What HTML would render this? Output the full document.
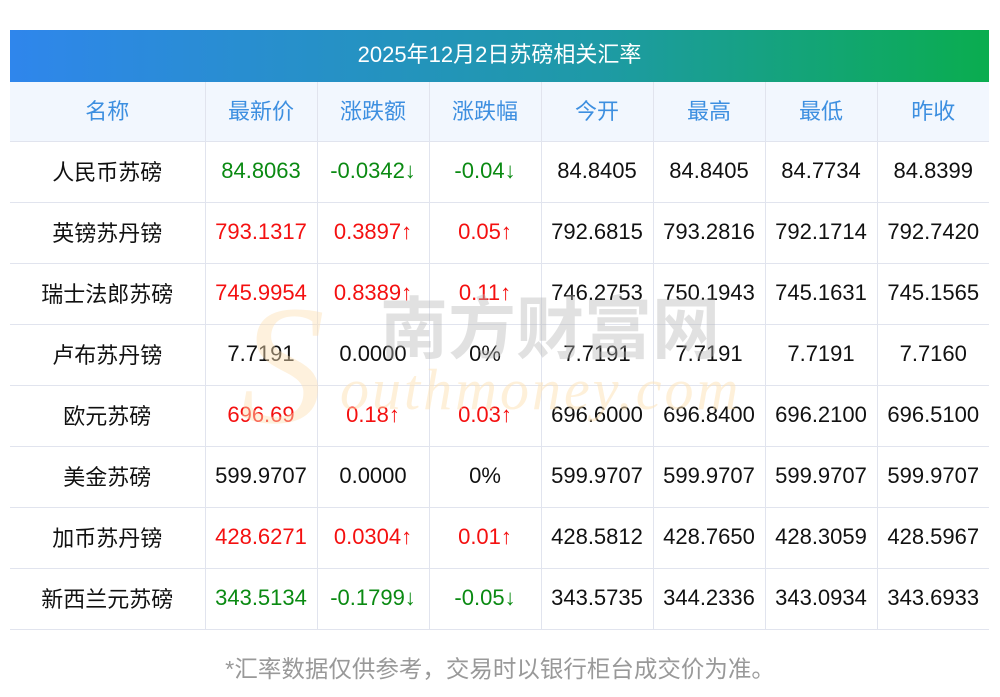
<!DOCTYPE html><html><head><meta charset="utf-8"><style>
body{margin:0;width:1000px;height:697px;background:#fff;font-family:"Liberation Sans","Noto Sans CJK SC",sans-serif;position:relative;overflow:hidden}
.title{position:absolute;left:10px;top:30px;width:979px;height:52px;background:linear-gradient(90deg,#2f86ec,#1e9aa6 60%,#0aad4f);color:#fff;font-size:22px;line-height:50px;text-align:center}
table{position:absolute;left:10px;top:82px;border-collapse:collapse;width:979px;table-layout:fixed}
td,th{border:1px solid #e1e4ee;height:57px;text-align:center;font-size:22px;font-weight:normal;padding:0 0 3px;color:#111}
tr:first-child th{border-top:none}
th{background:#f2f7fe;color:#3d8fe0;height:56px}
td:first-child,th:first-child{border-left:none}td:last-child,th:last-child{border-right:none}
.g{color:#0a8a12}.r{color:#f41010}
.foot{position:absolute;top:650px;left:0;width:1000px;text-align:center;color:#999;font-size:23.5px}
.wm1{position:absolute;left:380px;top:296px;font-size:68px;line-height:1;color:rgba(180,180,180,.4);font-weight:bold;z-index:2}
.wm2{position:absolute;left:340px;top:356px;font-size:58px;font-family:"Liberation Serif",serif;font-style:italic;color:rgba(253,225,180,.5);z-index:2;letter-spacing:3px}
.wmS{position:absolute;left:240px;top:280px;font-size:170px;font-family:"Liberation Serif",serif;font-style:italic;color:rgba(253,225,180,.45);z-index:2;line-height:1}
</style></head><body>
<div class="title">2025年12月2日苏磅相关汇率</div>
<table>
<colgroup><col style="width:195px"><col span="8" style="width:112px"></colgroup>
<tr><th>名称</th><th>最新价</th><th>涨跌额</th><th>涨跌幅</th><th>今开</th><th>最高</th><th>最低</th><th>昨收</th></tr>
<tr><td>人民币苏磅</td><td class="g">84.8063</td><td class="g">-0.0342↓</td><td class="g">-0.04↓</td><td>84.8405</td><td>84.8405</td><td>84.7734</td><td>84.8399</td></tr>
<tr><td>英镑苏丹镑</td><td class="r">793.1317</td><td class="r">0.3897↑</td><td class="r">0.05↑</td><td>792.6815</td><td>793.2816</td><td>792.1714</td><td>792.7420</td></tr>
<tr><td>瑞士法郎苏磅</td><td class="r">745.9954</td><td class="r">0.8389↑</td><td class="r">0.11↑</td><td>746.2753</td><td>750.1943</td><td>745.1631</td><td>745.1565</td></tr>
<tr><td>卢布苏丹镑</td><td>7.7191</td><td>0.0000</td><td>0%</td><td>7.7191</td><td>7.7191</td><td>7.7191</td><td>7.7160</td></tr>
<tr><td>欧元苏磅</td><td class="r">696.69</td><td class="r">0.18↑</td><td class="r">0.03↑</td><td>696.6000</td><td>696.8400</td><td>696.2100</td><td>696.5100</td></tr>
<tr><td>美金苏磅</td><td>599.9707</td><td>0.0000</td><td>0%</td><td>599.9707</td><td>599.9707</td><td>599.9707</td><td>599.9707</td></tr>
<tr><td>加币苏丹镑</td><td class="r">428.6271</td><td class="r">0.0304↑</td><td class="r">0.01↑</td><td>428.5812</td><td>428.7650</td><td>428.3059</td><td>428.5967</td></tr>
<tr><td>新西兰元苏磅</td><td class="g">343.5134</td><td class="g">-0.1799↓</td><td class="g">-0.05↓</td><td>343.5735</td><td>344.2336</td><td>343.0934</td><td>343.6933</td></tr>
</table>
<div class="wmS">S</div>
<div class="wm1">南方财富网</div>
<div class="wm2">outhmoney.com</div>
<div class="foot">*汇率数据仅供参考，交易时以银行柜台成交价为准。</div>
</body></html>
